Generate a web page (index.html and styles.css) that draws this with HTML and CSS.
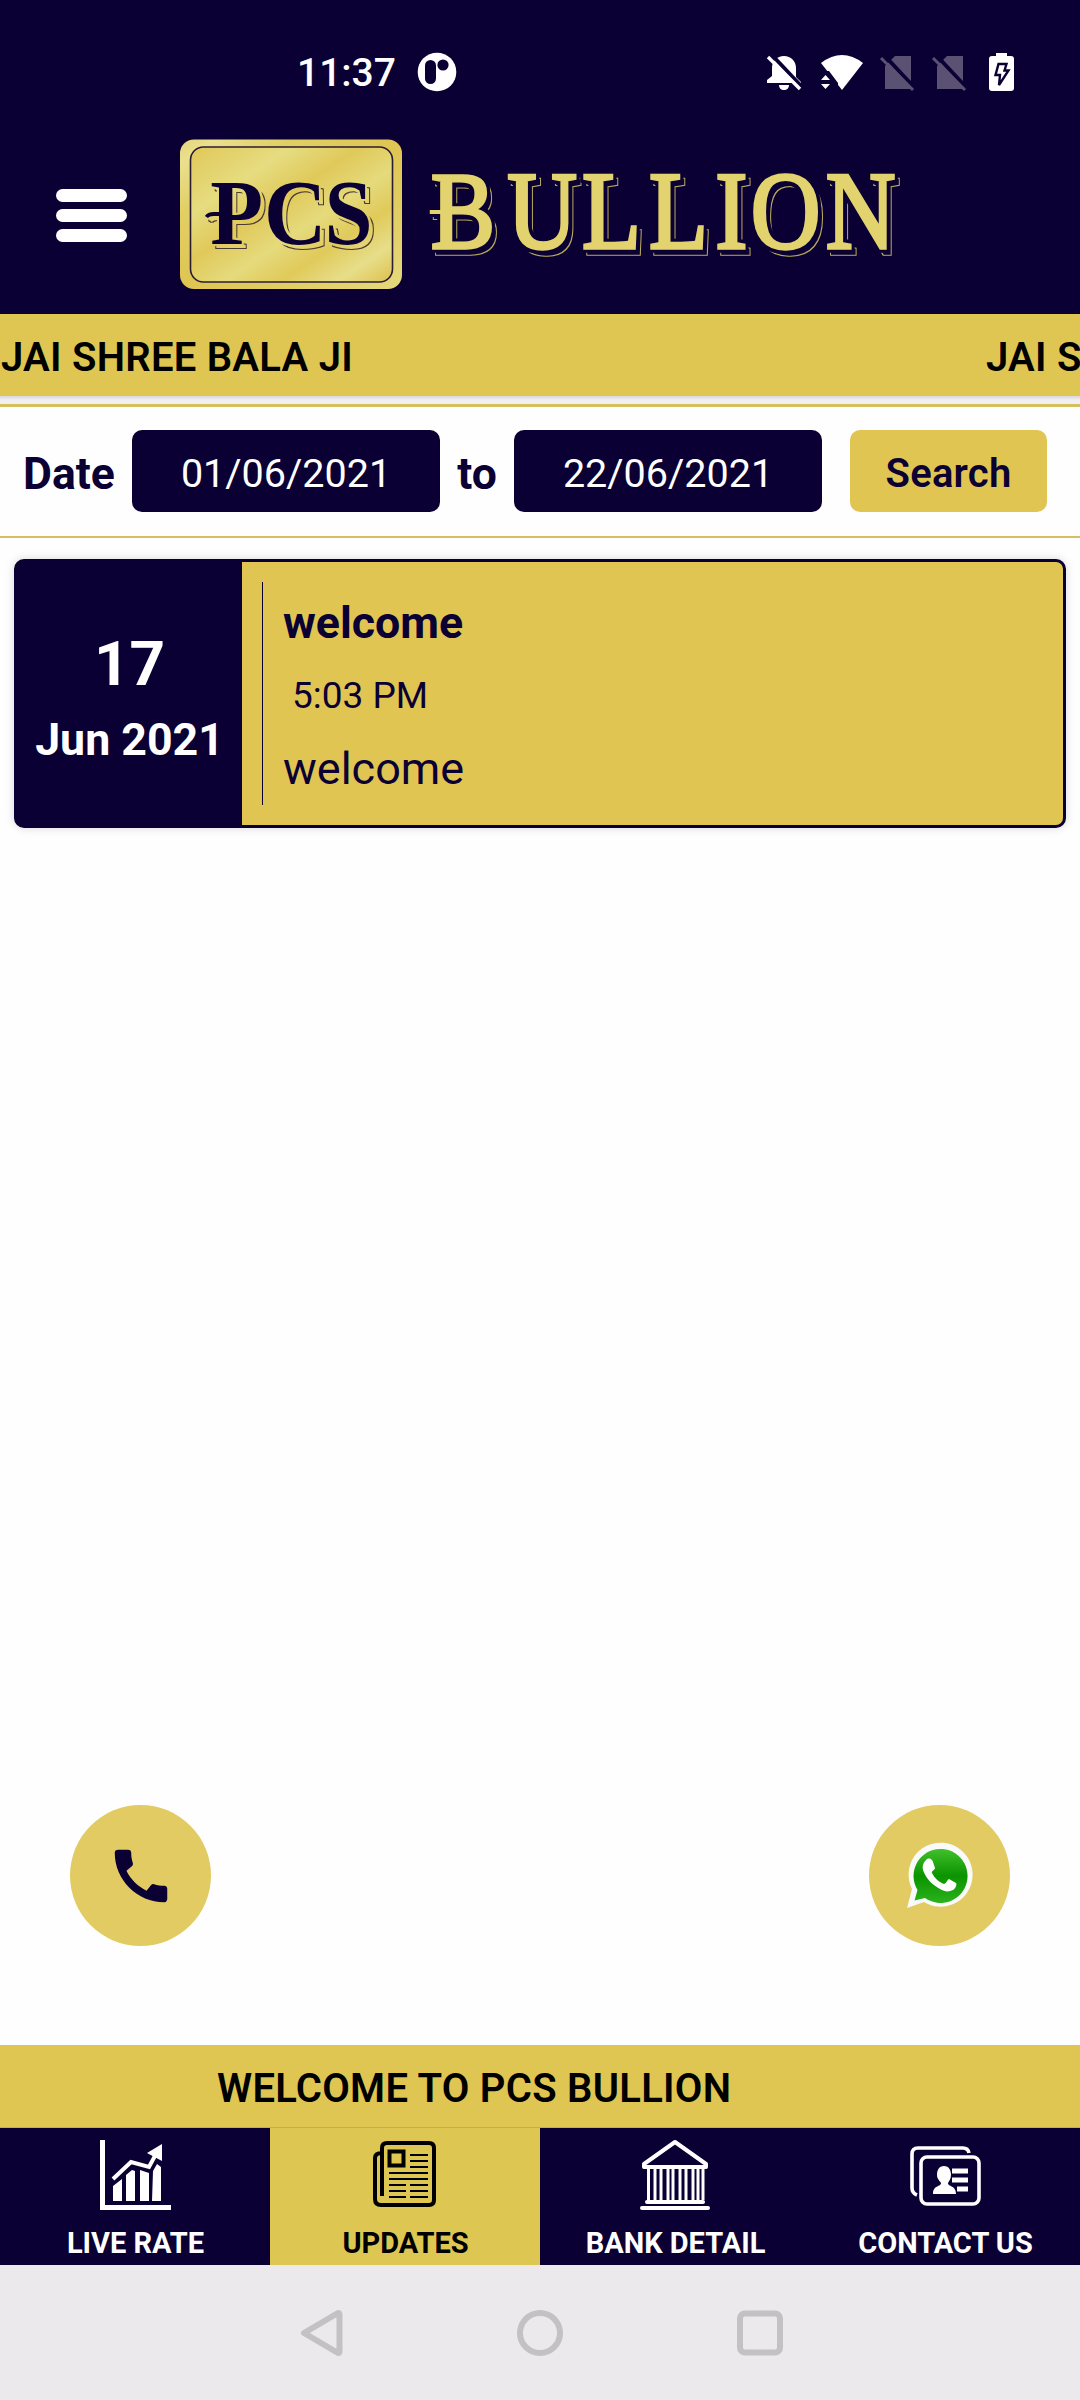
FILE: index.html
```html
<!DOCTYPE html>
<html lang="en">
<head>
<meta charset="utf-8">
<title>PCS Bullion</title>
<link rel="stylesheet" href="styles.css">
</head>
<body>
<div class="screen">
  <header class="top">
    <div class="status">
      <span class="clock">11:37</span>
      <svg class="app-dot" width="40" height="40" viewBox="0 0 40 40"><circle cx="20" cy="20" r="19.3" fill="#fff"/><rect x="8" y="8" width="11" height="24" rx="5.5" fill="#0b0033"/><circle cx="26" cy="13" r="5.6" fill="#0b0033"/></svg>
      <svg class="status-icons" width="270" height="44" viewBox="760 50 270 44">
        <path fill="#fff" d="M784 56c7 0 12 5 12 12v9l5 5v1H767v-3l5-4v-8c0-7 5-12 12-12zM779 85h10c0 3-2 5-5 5s-5-2-5-5z"/>
        <path d="M771 54l32 34" stroke="#0b0033" stroke-width="4"/><path d="M768 57l32 32" stroke="#fff" stroke-width="3.4"/>
        <path fill="#fff" d="M821 63q21-16 42 0L842 90z"/>
        <path fill="#0b0033" d="M819 71h10l9 12v8h-19z"/><path fill="#fff" d="M821 80l4.500-5 4.500 5zM821 84h9l-4.500 5z"/>
        <g id="sim"><path fill="#5a5173" d="M885 66l10-10h16v33h-26z"/><path d="M884 55l29 31" stroke="#0b0033" stroke-width="4"/><path d="M881 58l32 32" stroke="#5a5173" stroke-width="3"/></g>
        <use href="#sim" x="52"/>
        <path fill="#fff" d="M996 53h11v3h4q3 0 3 3v29q0 3-3 3h-19q-3 0-3-3V59q0-3 3-3h4z"/>
        <path d="M998.500 64h8l-2 6.500h4l-9.500 14.500 1-10h-4.500z" fill="none" stroke="#0b0033" stroke-width="2.400"/>
      </svg>
    </div>
    <div class="brand">
      <div class="burger"><i></i><i></i><i></i></div>
      <svg class="logo" width="730" height="154" viewBox="178 138 730 154">
        <defs>
          <linearGradient id="plate" x1="0" y1="0" x2="1" y2="1"><stop offset="0" stop-color="#e6d675"/><stop offset=".08" stop-color="#e9e08f"/><stop offset=".25" stop-color="#e2cf63"/><stop offset=".5" stop-color="#dfc552"/><stop offset=".8" stop-color="#e3d068"/><stop offset="1" stop-color="#e6d97e"/></linearGradient>
          <linearGradient id="inner" x1="0" y1="0" x2="1" y2="1"><stop offset="0" stop-color="#e0c858"/><stop offset=".25" stop-color="#e6dc80"/><stop offset=".42" stop-color="#e0c95a"/><stop offset=".58" stop-color="#e5da7c"/><stop offset=".72" stop-color="#e0ca5a"/><stop offset=".86" stop-color="#e7de8a"/><stop offset="1" stop-color="#dcc14d"/></linearGradient>
          <filter id="inline-gold" filterUnits="userSpaceOnUse" x="470" y="150" width="580" height="130" color-interpolation-filters="sRGB">
            <feOffset in="SourceAlpha" dx="5" dy="5" result="moved"/>
            <feMorphology in="moved" operator="dilate" radius="1" result="grown"/>
            <feComposite in="grown" in2="moved" operator="out" result="ring"/>
            <feMorphology in="SourceAlpha" operator="dilate" radius="3" result="gap"/>
            <feComposite in="ring" in2="gap" operator="out" result="line"/>
            <feFlood flood-color="#b9a95b"/><feComposite in2="line" operator="in" result="tint"/>
            <feMerge><feMergeNode in="tint"/><feMergeNode in="SourceGraphic"/></feMerge>
          </filter>
          <filter id="inline-dark" filterUnits="userSpaceOnUse" x="210" y="150" width="240" height="120" color-interpolation-filters="sRGB">
            <feOffset in="SourceAlpha" dx="4" dy="4" result="moved"/>
            <feMorphology in="moved" operator="dilate" radius="1" result="grown"/>
            <feComposite in="grown" in2="moved" operator="out" result="ring"/>
            <feMorphology in="SourceAlpha" operator="dilate" radius="2" result="gap"/>
            <feComposite in="ring" in2="gap" operator="out" result="line"/>
            <feFlood flood-color="#4a3a35"/><feComposite in2="line" operator="in" result="tint"/>
            <feMerge><feMergeNode in="tint"/><feMergeNode in="SourceGraphic"/></feMerge>
          </filter>
        </defs>
        <rect x="180" y="139.500" width="222" height="149.500" rx="14" fill="url(#plate)"/>
        <rect x="190.500" y="147" width="202" height="135" rx="13" fill="url(#inner)" stroke="#2b1c35" stroke-width="1.600"/>
        <g class="pcs" transform="scale(.93 1)" filter="url(#inline-dark)">
          <path d="M222 217q2-3 8-3h6" fill="none" stroke="#0b0033" stroke-width="4"/>
          <text x="226 284 349" y="244">PCS</text>
        </g>
        <g class="bullion" transform="scale(.87 1)" filter="url(#inline-gold)">
          <path d="M494 212h14" stroke="#e3d36e" stroke-width="4"/>
          <text x="495 583 669 746 822 863 949" y="248">BULLION</text>
        </g>
      </svg>
    </div>
  </header>

  <div class="ticker"><span>JAI SHREE BALA JI</span><span>JAI SHREE BALA JI</span></div>
  <div class="ticker-shade"></div>

  <form class="filter">
    <label class="lbl date">Date</label>
    <div class="field">01/06/2021</div>
    <label class="lbl to">to</label>
    <div class="field">22/06/2021</div>
    <div class="search">Search</div>
  </form>

  <main class="list">
    <article class="card">
      <div class="day"><b class="num">17</b><b class="month">Jun 2021</b></div>
      <div class="rule"></div>
      <div class="body"><b class="title">welcome</b><span class="time">5:03 PM</span><span class="text">welcome</span></div>
    </article>
    <div class="fabs">
      <div class="fab"><svg width="70" height="70" viewBox="0 0 24 24"><path fill="#0b0033" d="M20.010 15.380c-1.230 0-2.420-.2-3.530-.56-.35-.12-.74-.03-1.010.24l-1.570 1.970c-2.830-1.350-5.480-3.900-6.890-6.830l1.950-1.660c.27-.28.35-.67.24-1.020-.37-1.110-.56-2.300-.56-3.530 0-.54-.45-.99-.99-.99H4.190C3.650 3 3 3.240 3 3.990 3 13.280 10.730 21 20.010 21c.71 0 .99-.63.99-1.180v-3.450c0-.54-.45-.99-.99-.99z"/></svg></div>
      <div class="fab"><svg width="68" height="70" viewBox="1 1 68 70">
        <defs><linearGradient id="wa" x1="0" y1="0" x2="0" y2="1"><stop offset="0" stop-color="#41c02b"/><stop offset=".5" stop-color="#0b9300"/><stop offset="1" stop-color="#2bb31c"/></linearGradient></defs>
        <path fill="#fafafa" d="M2 68L7 49A32 32 0 1 1 19 62z"/><path fill="url(#wa)" d="M9.500 60.500L12.500 50A27 27 0 1 1 20 58z"/>
        <path fill="#fff" d="M21 20c3-3 6-1 7 2l2 6c0 2-4 3-3 5 3 6 7 9 12 11 2 0 3-4 5-5l7 4c1 1 0 5-3 7-4 2-8 2-13-1-9-5-14-11-17-19-1-4 0-7 3-10z"/></svg></div>
    </div>
  </main>

  <div class="welcome">WELCOME TO PCS BULLION</div>
  <nav class="tabs">
    <div class="tab"><svg width="72" height="72" viewBox="0 0 72 72" fill="#fff"><path d="M1 1h5v65h66v5H1z"/><path d="M14 47l9-7v22h-9zM27 36l6-5 3 1v30h-9zM41 31l9 3v28h-9zM54 32l4-7 4 3 0 34h-9z"/><path d="M14 40l18-17 18 5 7-13" fill="none" stroke="#fff" stroke-width="4"/><path d="M48 14L63 5v17z"/></svg><span>LIVE RATE</span></div>
    <div class="tab on"><svg width="72" height="72" viewBox="-3 0 72 72" fill="none" stroke="#000" stroke-width="4"><path d="M10 57V9q0-5 5-5h42q5 0 5 5v52q0 5-5 5H9q-6 0-6-6V19q0-5 7-5"/><path d="M10 14v43" stroke-width="4"/><rect x="17.500" y="12.500" width="14" height="14"/><path stroke-width="2" d="M38 16h18M38 22h18M38 28h18M17 34h39M17 40h39M17 46h17M38 46h18M17 52h17M38 52h18M17 58h17M38 58h18"/></svg><span>UPDATES</span></div>
    <div class="tab"><svg width="72" height="72" viewBox="0 0 72 72" fill="none" stroke="#fff" stroke-linejoin="round" stroke-linecap="round"><path stroke-width="4" d="M36 3L5 25v3h62v-3z"/><path stroke-width="4" d="M8 63h56"/><path stroke-width="4" d="M3 69h66"/><path stroke-width="3" stroke-linecap="butt" d="M9.500 29v32M16 29v32M22 29v32M29 29v32M34 29v32M41 29v32M47 29v32M54 29v32M59 29v32M64 29v32"/></svg><span>BANK DETAIL</span></div>
    <div class="tab"><svg width="72" height="72" viewBox="0 0 72 72" fill="none" stroke="#fff"><path stroke-width="3.600" d="M60 14q-1-5-6-5H9q-6 0-6 6v34q0 5 5 7"/><rect stroke-width="3.600" x="12" y="18" width="58" height="47" rx="6"/><path fill="#fff" stroke="none" d="M35 27c5 0 7 4 7 9 0 4-2 6-3 8 0 4 8 2 8 11H24c0-9 8-7 8-11-1-2-4-4-4-8 0-5 2-9 7-9z"/><path stroke-width="5" d="M43 32h16M43 41h16M48 50h11"/></svg><span>CONTACT US</span></div>
  </nav>
  <footer class="sysnav">
    <svg width="500" height="60" viewBox="290 2300 500 60" fill="none" stroke="#c3c1c4" stroke-width="6" stroke-linejoin="round"><path d="M304 2333l34-20q1.500 0 1.500 2v36q0 2-1.500 2z"/><circle cx="540" cy="2333" r="20"/><rect x="740" y="2313.500" width="40" height="39" rx="5"/></svg>
  </footer>
</div>
</body>
</html>
```
FILE: styles.css
```css
* { box-sizing: border-box; }
body { margin: 0; background: #fefefe; font-family: Roboto, sans-serif; }
.screen { width: 1080px; height: 2400px; display: flex; flex-direction: column; overflow: hidden; }

.top { height: 314px; background: #0b0033; flex: none; }
.status { height: 138px; padding: 50px 58px 0 297px; display: flex; align-items: flex-start; color: #fff; }
.clock { width: 120px; margin-top: 1px; font-size: 39px; line-height: 44px; font-weight: 500; white-space: nowrap; }
.app-dot { margin-top: 2px; }
.status-icons { margin-left: auto; margin-right: -8px; }
.brand { display: flex; align-items: flex-start; padding-left: 56px; }
.burger { width: 71px; margin: 51px 51px 0 0; display: flex; flex-direction: column; gap: 7px; }
.burger i { height: 13px; border-radius: 7px; background: #fff; }
.logo text { font-family: "Liberation Serif", serif; }
.pcs text { font-size: 93px; font-weight: 700; fill: #0b0033; }
.bullion text { font-size: 111px; fill: #e3d36e; stroke: #e3d36e; stroke-width: 3.4px; }

.ticker { height: 82px; flex: none; background: #dfc652; display: flex; gap: 633px; padding-left: 1px; white-space: nowrap; font-size: 40px; line-height: 87px; letter-spacing: .25px; font-weight: 600; color: #000; overflow: hidden; }
.ticker span { width: 352px; flex: none; }
.ticker-shade { height: 8px; flex: none; background: linear-gradient(#d9d7da, #f1eff2 50%); }

.filter { height: 134px; flex: none; border-top: 3px solid #d5c060; border-bottom: 2px solid #d8be62; display: flex; align-items: flex-start; padding: 23px 0 0 23px; color: #0b0033; }
.lbl { font-size: 44.5px; line-height: 88px; font-weight: 700; white-space: nowrap; }
.date { width: 109px; }
.to { width: 74px; text-align: center; }
.field { width: 308px; height: 82px; border-radius: 10px; background: #0b0033; color: #fff; text-align: center; font-size: 39.5px; line-height: 88px; }
.search { width: 197px; height: 82px; margin-left: 28px; border-radius: 10px; background: #e0c552; text-align: center; font-size: 40px; line-height: 88px; font-weight: 600; letter-spacing: .2px; }

.list { flex: 1; padding: 21px 14px 0; display: flex; flex-direction: column; }
.card { height: 269px; flex: none; display: flex; background: #e0c552; border: 3px solid #0b0033; border-radius: 10px; box-shadow: 0 0 10px rgba(11, 0, 51, .15); color: #0b0033; white-space: nowrap; }
.day { width: 225px; background: #0b0033; color: #fff; display: flex; flex-direction: column; align-items: center; padding-top: 64px; }
.num { font-size: 62px; line-height: 76px; }
.month { font-size: 44.7px; line-height: 77px; }
.rule { width: 1px; margin: 20px 20px 20px 20px; background: #0b0033; }
.body { display: flex; flex-direction: column; padding-top: 23px; }
.title { font-size: 44.7px; line-height: 76px; }
.time { font-size: 37px; line-height: 70px; padding-left: 9px; }
.text { font-size: 45px; line-height: 76px; }
.fabs { margin-top: auto; padding: 0 56px 99px; display: flex; justify-content: space-between; }
.fab { width: 141px; height: 141px; border-radius: 50%; background: #e2cb62; display: grid; place-items: center; }

.welcome { height: 83px; flex: none; background: #dfc552; border-bottom: 1px solid #b7aa82; padding-left: 217px; font-size: 40px; line-height: 88px; letter-spacing: .27px; font-weight: 600; white-space: nowrap; color: #000; }
.tabs { height: 137px; flex: none; display: grid; grid-template-columns: repeat(4, 1fr); background: #0b0033; color: #fff; }
.tab { display: flex; flex-direction: column; align-items: center; padding-top: 11px; font-size: 29px; font-weight: 700; white-space: nowrap; }
.tab span { margin-top: 14px; padding-left: 1px; line-height: 36px; }
.on { background: #dec652; color: #000; }
.sysnav { height: 135px; flex: none; background: #ebe9eb; display: flex; justify-content: center; padding-top: 35px; }
```
